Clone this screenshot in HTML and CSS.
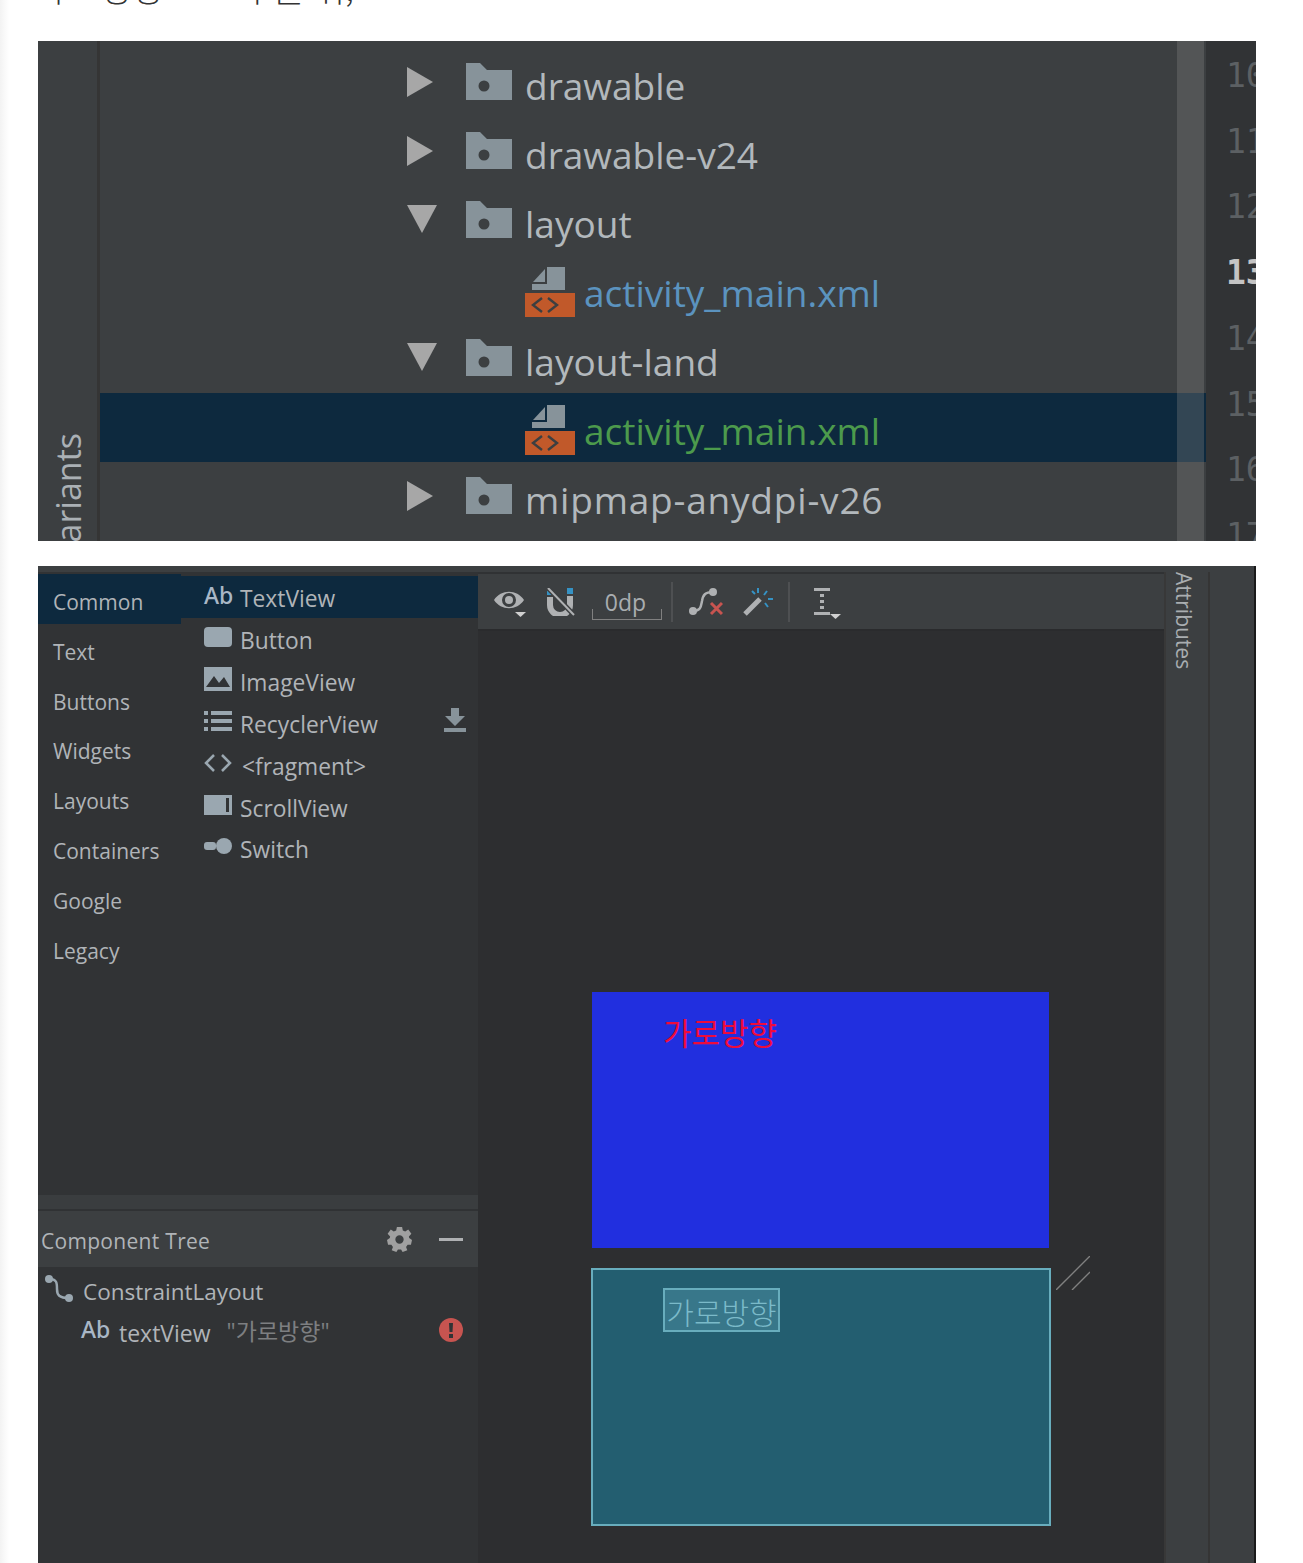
FILE: index.html
```html
<!DOCTYPE html>
<html lang="ko">
<head>
<meta charset="utf-8">
<title>Android Studio layout-land</title>
<link rel="stylesheet" href="styles.css">
</head>
<body>
<svg class="defs" width="0" height="0" aria-hidden="true">
  <symbol id="folder" viewBox="0 0 46 37"><path fill="#87939a" d="M0 0H14L21 7H46V37H0Z"/><circle cx="18" cy="23" r="5.5" fill="#3c3f41"/></symbol>
  <symbol id="right" viewBox="0 0 30 30"><path fill="#a7a7a7" d="M0 0L26 15L0 30Z"/></symbol>
  <symbol id="down" viewBox="0 0 30 30"><path fill="#a7a7a7" d="M0 0H30L15 28Z"/></symbol>
  <symbol id="xml" viewBox="0 0 50 50"><path fill="#87939a" d="M22 0H40V23H7V17H22Z"/><path fill="#87939a" d="M20 2V15H8Z"/><rect x="0" y="26" width="50" height="24" fill="#c1592a"/><path fill="none" stroke="#3c3f41" stroke-width="2.4" d="M17 31L8 38L17 45M23 31L32 38L23 45"/></symbol>
</svg>
<main class="page">
  <p class="heading"><span class="h1">우</span><span class="h2">방향</span><span class="h3">수를 뒤,</span></p>

  <section class="project">
    <aside class="rail"><span class="rail-label">Variants</span></aside>
    <div class="tree">
      <div class="row"><svg class="arrow"><use href="#right"/></svg><svg class="folder"><use href="#folder"/></svg><span class="name">drawable</span></div>
      <div class="row"><svg class="arrow"><use href="#right"/></svg><svg class="folder"><use href="#folder"/></svg><span class="name">drawable-v24</span></div>
      <div class="row"><svg class="arrow"><use href="#down"/></svg><svg class="folder"><use href="#folder"/></svg><span class="name">layout</span></div>
      <div class="row file"><svg class="xml"><use href="#xml"/></svg><span class="name blue">activity_main.xml</span></div>
      <div class="row"><svg class="arrow"><use href="#down"/></svg><svg class="folder"><use href="#folder"/></svg><span class="name">layout-land</span></div>
      <div class="row file selected"><svg class="xml"><use href="#xml"/></svg><span class="name green">activity_main.xml</span></div>
      <div class="row"><svg class="arrow"><use href="#right"/></svg><svg class="folder"><use href="#folder"/></svg><span class="name wide">mipmap-anydpi-v26</span></div>
      <div class="scrollbar"></div>
    </div>
    <div class="gutter">
      <span>10</span><span>11</span><span>12</span><span class="current">13</span><span>14</span><span>15</span><span>16</span><span>17</span>
    </div>
  </section>

  <section class="editor">
    <div class="left">
      <div class="palette">
        <ul class="cats">
          <li class="cat on">Common</li><li class="cat">Text</li><li class="cat">Buttons</li><li class="cat">Widgets</li><li class="cat">Layouts</li><li class="cat">Containers</li><li class="cat">Google</li><li class="cat">Legacy</li>
        </ul>
        <ul class="items">
          <li class="item on"><span class="ab">Ab</span>TextView</li>
          <li class="item"><svg class="ico" viewBox="0 0 28 22"><rect y="1" width="28" height="20" rx="4" fill="#9aa7b0"/></svg>Button</li>
          <li class="item"><svg class="ico" viewBox="0 0 28 24"><path fill="#9aa7b0" fill-rule="evenodd" d="M0 0H28V24H0ZM2 20H26L20 10L15 16L10 9Z"/></svg>ImageView</li>
          <li class="item"><svg class="ico" viewBox="0 0 28 22"><path fill="#9aa7b0" d="M0 1H4V5H0ZM7 1H28V5H7ZM0 9H4V13H0ZM7 9H28V13H7ZM0 17H4V21H0ZM7 17H28V21H7Z"/></svg>RecyclerView<svg class="dl" viewBox="0 0 22 24"><path fill="#87939a" d="M7 0H15V8H21L11 18L1 8H7ZM0 20H22V24H0Z"/></svg></li>
          <li class="item"><svg class="ico" viewBox="0 0 28 22"><path fill="none" stroke="#9aa7b0" stroke-width="2.500" d="M10 3L2 11L10 19M18 3L26 11L18 19"/></svg><span class="frag">&lt;fragment&gt;</span></li>
          <li class="item"><svg class="ico" viewBox="0 0 28 22"><path fill="#9aa7b0" fill-rule="evenodd" d="M0 1H28V21H0ZM22 4V18H25V4Z"/></svg>ScrollView</li>
          <li class="item"><svg class="ico" viewBox="0 0 28 22"><rect x="0" y="7" width="12" height="8" rx="3" fill="#9aa7b0"/><circle cx="20" cy="11" r="8" fill="#9aa7b0"/></svg>Switch</li>
        </ul>
      </div>
      <div class="tree-head">
        <span class="tree-title">Component Tree</span>
        <svg class="gear" viewBox="0 0 24 24"><path fill="#a0a0a0" fill-rule="evenodd" d="M9.500 0H14.500L15.200 3.300L17.500 4.300L20.400 2.500L23.400 6.500L21 9L21.300 10.500L24 12.500L23 17L19.800 17L18.300 19.200L19.500 22.300L15 24L13.500 21.500H10.500L9 24L4.500 22.300L5.700 19.200L4.200 17L1 17L0 12.500L2.700 10.500L3 9L0.600 6.500L3.600 2.500L6.500 4.300L8.800 3.300ZM12 8A4 4 0 1 0 12 16A4 4 0 1 0 12 8Z"/></svg>
        <span class="minus"></span>
      </div>
      <div class="ctree">
        <div class="cnode"><svg class="cl" viewBox="0 0 28 28"><circle cx="4" cy="4" r="4" fill="#9aa7b0"/><circle cx="24" cy="23" r="4" fill="#9aa7b0"/><path fill="none" stroke="#9aa7b0" stroke-width="2.500" d="M4 4C12 4 12 8 12 14C12 20 14 23 24 23"/></svg><span>ConstraintLayout</span></div>
        <div class="cnode child"><span class="ab small">Ab</span><span class="tv">textView</span><span class="quote">"가로방향"</span>
          <svg class="err" viewBox="0 0 24 24"><circle cx="12" cy="12" r="12" fill="#c75450"/><path fill="#313335" d="M10 5H14L13.500 14H10.500ZM10 16H14V20H10Z"/></svg></div>
      </div>
    </div>

    <div class="design">
      <div class="toolbar">
        <svg class="tb eye" viewBox="0 0 32 28"><path fill="#afb1b3" fill-rule="evenodd" d="M0 10C7 -1 23 -1 30 10C23 21 7 21 0 10ZM15 3A7 7 0 1 0 15 17A7 7 0 1 0 15 3Z"/><circle cx="15" cy="10" r="4" fill="#afb1b3"/><path fill="#d0d0d0" d="M21 22H32L26.500 27Z"/></svg>
        <svg class="tb magnet" viewBox="0 0 28 28"><path fill="#3592c4" d="M0 3H6V7H0ZM20 0H26V6H20Z"/><path fill="#afb1b3" d="M0 9H6V17A7 7 0 0 0 20 17V8H26V17A13 13 0 0 1 0 17Z"/><path stroke="#3c3f41" stroke-width="5" d="M1 0L27 27"/><path stroke="#afb1b3" stroke-width="2" d="M1 0L27 27"/></svg>
        <div class="odp"><span>0dp</span></div>
        <span class="sep"></span>
        <svg class="tb conn" viewBox="0 0 34 28"><circle cx="4" cy="23" r="4" fill="#afb1b3"/><circle cx="24" cy="4" r="4" fill="#afb1b3"/><path fill="none" stroke="#afb1b3" stroke-width="2.500" d="M4 23C12 23 12 18 13 13C14 7 16 4 24 4"/><path stroke="#c75450" stroke-width="3" d="M22 15L33 26M33 15L22 26"/></svg>
        <svg class="tb wand" viewBox="0 0 30 28"><path stroke="#afb1b3" stroke-width="5" d="M2 26L17 11"/><path stroke="#3592c4" stroke-width="2" d="M15 0V5M24 3L21 7M30 11H25M22 15L25 19M9 3L12 6"/></svg>
        <span class="sep second"></span>
        <svg class="tb align" viewBox="0 0 28 32"><path fill="#afb1b3" d="M0 0H16V3H0ZM6 6H10V9H6ZM6 12H10V15H6ZM6 18H10V21H6ZM0 24H16V27H0Z"/><path fill="#d0d0d0" d="M16 26H27L21.500 31Z"/></svg>
      </div>
      <div class="canvas">
        <div class="preview"><span>가로방향</span></div>
        <div class="blueprint">
          <div class="bp-text">가로방향</div>
          <svg class="resize" viewBox="0 0 34 34"><path stroke="#808080" stroke-width="1.400" fill="none" d="M0 34L34 0M16 34L34 16"/></svg>
        </div>
      </div>
    </div>

    <aside class="attr"><span>Attributes</span></aside>
    <div class="far"></div>
  </section>
</main>
</body>
</html>
```

FILE: styles.css
```css
* { box-sizing: border-box; }
html, body { margin: 0; padding: 0; }
body {
  width: 1303px;
  height: 1563px;
  overflow: hidden;
  background: linear-gradient(to right, #f3f3f3 0, #fbfbfb 6px, #fff 9px);
  font-family: "Open Sans", "Noto Sans CJK KR", sans-serif;
}
.defs { position: absolute; }
ul { list-style: none; margin: 0; padding: 0; }
.page { padding-left: 38px; width: 1256px; }

.heading {
  margin: 0;
  height: 41px;
  overflow: hidden;
  display: flex;
  padding-left: 5px;
  font: 300 34px/34px "Noto Sans CJK KR", sans-serif;
  color: #333;
}
.heading span { margin-top: -29px; white-space: nowrap; }
.h2 { margin-left: 27px; }
.h3 { margin-left: 78px; }

.project { height: 500px; display: flex; background: #3c3f41; overflow: hidden; }
.rail { width: 62px; flex: none; border-right: 3px solid #353535; overflow: hidden; padding-top: 392px; padding-left: 9px; }
.rail-label {
  display: block;
  writing-mode: vertical-rl;
  transform: rotate(180deg);
  font-size: 34px;
  line-height: 42px;
  color: #aab0b5;
}
.tree { position: relative; width: 1106px; flex: none; padding-top: 7px; }
.row { height: 69px; display: flex; align-items: center; padding-left: 307px; color: #b2b8bc; }
.row.file { padding-left: 425px; }
.row.selected { background: #0d293e; }
.arrow { width: 30px; height: 30px; margin-right: 29px; margin-top: -1px; }
.folder { width: 46px; height: 37px; margin-right: 14px; margin-top: -2px; }
.xml { width: 50px; height: 50px; margin-right: 10px; margin-top: 4px; }
.name { font-size: 37px; line-height: 50px; white-space: nowrap; margin-top: 6px; margin-left: -1px; }
.name.wide { letter-spacing: 0.8px; }
.blue { color: #5b93bf; }
.green { color: #4c9a4c; }
.scrollbar { position: absolute; left: 1077px; top: 0; bottom: 0; width: 27px; background: rgba(130, 130, 130, 0.33); }
.gutter {
  flex: 1;
  background: #313335;
  overflow: hidden;
  padding: 2px 0 0 22px;
  display: flex;
  flex-direction: column;
  font: 33px/65.7px "DejaVu Sans Mono", monospace;
  color: #5c6063;
}
.gutter span { margin-left: -2px; }
.gutter .current { color: #c4c4c4; font-weight: 700; }

.editor { margin-top: 25px; height: 997px; display: flex; padding-top: 6px; background: #3c3f41; border-right: 2px solid #1a1a1a; }
.left { width: 440px; flex: none; display: flex; flex-direction: column; background: #313335; }
.palette { height: 623px; display: flex; background: #313335; border-top: 2px solid #313335; }
.cats { width: 143px; flex: none; }
.cat { height: 49.800px; padding-left: 15px; font-size: 21px; line-height: 56px; color: #b0b4b8; }
.cat.on { background: #0d293e; }
.items { flex: 1; padding-top: 2px; }
.item { height: 41.850px; display: flex; align-items: center; padding: 4px 0 0 23px; font-size: 22.800px; color: #b0b4b8; }
.item.on { background: #0d293e; }
.ab { width: 36px; flex: none; font: 500 23px/1 "Noto Sans", sans-serif; color: #a9b7c6; margin-top: -6px; }
.ico { width: 28px; height: 24px; flex: none; margin-right: 8px; margin-top: -7px; }
.frag { margin-left: 2px; }
.dl { width: 22px; height: 24px; margin-left: auto; margin-right: 12px; margin-top: -8px; }

.tree-head {
  height: 72px;
  display: flex;
  align-items: center;
  padding: 19px 15px 0 3px;
  background: linear-gradient(#3a3d3f 0 14px, #303234 14px 16px, #3c3f41 16px);
  font-size: 21px;
  color: #b0b4b8;
}
.tree-title { flex: 1; letter-spacing: 0.3px; }
.gear { width: 25px; height: 25px; margin-right: 27px; margin-top: -3px; }
.minus { width: 24px; height: 3px; background: #afb1b3; margin-top: -3px; }
.ctree { flex: 1; padding: 5px 15px 0 7px; color: #b0b4b8; font-size: 22.500px; }
.cnode { height: 38px; display: flex; align-items: center; }
.cl { width: 28px; height: 28px; margin-right: 10px; margin-top: -4px; }
.child { padding-left: 36px; margin-top: 3px; }
.ab.small { margin-top: -6px; width: 38px; }
.tv { font-size: 23px; margin-top: 2px; }
.quote { margin-left: 16px; font-size: 23px; color: #7d7f81; margin-top: -4px; }
.err { width: 24px; height: 24px; margin-left: auto; margin-top: -4px; }

.design { width: 686px; flex: none; display: flex; flex-direction: column; background: #2d2e30; }
.toolbar { height: 59px; display: flex; align-items: center; background: #3c3f41; padding-left: 16px; border-top: 2px solid #303234; border-bottom: 2px solid #2a2b2d; }
.tb { flex: none; }
.eye { width: 32px; height: 28px; margin-right: 21px; margin-top: 4px; }
.magnet { width: 28px; height: 28px; margin-right: 17px; }
.odp {
  width: 70px;
  height: 32px;
  flex: none;
  padding-right: 3px;
  border-bottom: 1px solid #808080;
  text-align: center;
  font-size: 23px;
  line-height: 29px;
  color: #a9adb0;
  margin-right: 9px;
  margin-top: 4px;
  background: linear-gradient(#808080, #808080) left bottom / 1px 10px no-repeat, linear-gradient(#808080, #808080) right bottom / 1px 10px no-repeat;
}
.sep { width: 2px; height: 40px; flex: none; background: #4e5052; margin-right: 16px; }
.conn { width: 34px; height: 28px; margin-right: 20px; }
.wand { width: 30px; height: 28px; margin-right: 15px; }
.sep.second { margin-right: 24px; }
.align { width: 28px; height: 32px; margin-top: 4px; }

.canvas { flex: 1; padding: 361px 0 0 114px; }
.preview { width: 457px; height: 256px; background: #212fdf; padding: 20px 0 0 71px; }
.preview span { display: block; font: 31px/40px "Noto Sans CJK KR", sans-serif; color: #ee0b3b; }
.blueprint { position: relative; width: 460px; height: 258px; margin: 20px 0 0 -1px; background: #235e70; border: 2px solid #68adbd; padding: 18px 0 0 70px; }
.bp-text { width: 117px; height: 44px; background: #38778a; border: 2px solid #68adbd; font: 300 30px/42px "Noto Sans CJK KR", sans-serif; color: #7bbac9; text-align: center; white-space: nowrap; }
.resize { position: absolute; left: 463px; top: -14px; width: 34px; height: 34px; }

.attr { width: 46px; flex: none; border-left: 2px solid #383838; border-right: 2px solid #353535; padding: 0 0 0 6px; }
.attr span { display: block; writing-mode: vertical-rl; font-size: 21px; line-height: 24px; color: #a9adb0; }
.far { flex: 1; background: #3c3f41; }
```
